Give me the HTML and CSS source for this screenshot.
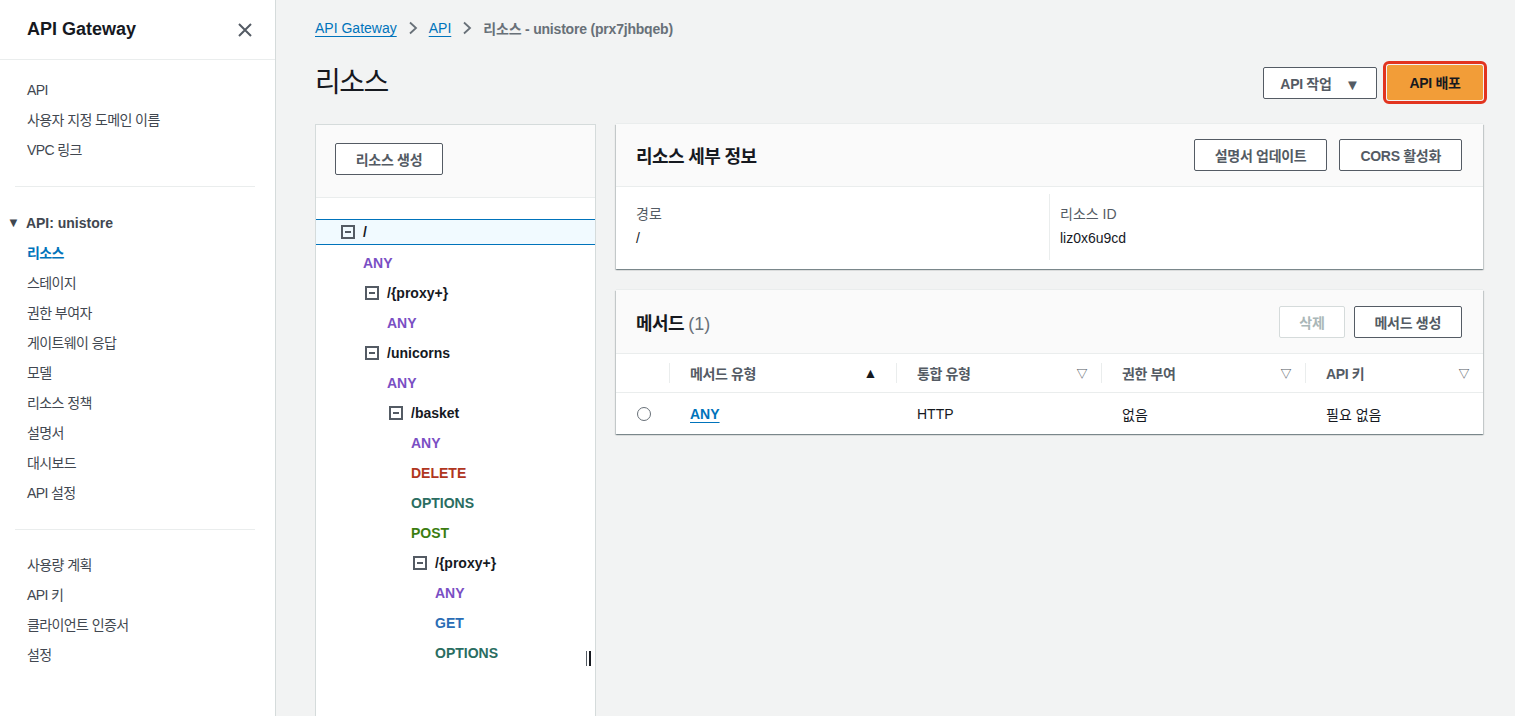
FILE: index.html
```html
<!DOCTYPE html>
<html lang="ko">
<head>
<meta charset="utf-8">
<title>API Gateway - 리소스</title>
<link rel="stylesheet" href="styles.css">
</head>
<body>
<div class="app">
  <aside class="sidebar">
    <div class="sb-head">
      <span class="sb-title">API Gateway</span>
      <svg class="sb-close" width="16" height="16" viewBox="0 0 16 16"><path d="M2 2 L14 14 M14 2 L2 14" stroke="#545b64" stroke-width="2" fill="none"/></svg>
    </div>
    <ul class="sb-list first">
      <li>API</li>
      <li>사용자 지정 도메인 이름</li>
      <li>VPC 링크</li>
    </ul>
    <div class="sb-divider"></div>
    <div class="sb-group">
      <div class="sb-group-title"><span class="caret">▼</span>API: unistore</div>
      <ul class="sb-list">
        <li class="active">리소스</li>
        <li>스테이지</li>
        <li>권한 부여자</li>
        <li>게이트웨이 응답</li>
        <li>모델</li>
        <li>리소스 정책</li>
        <li>설명서</li>
        <li>대시보드</li>
        <li>API 설정</li>
      </ul>
    </div>
    <div class="sb-divider"></div>
    <ul class="sb-list last">
      <li>사용량 계획</li>
      <li>API 키</li>
      <li>클라이언트 인증서</li>
      <li>설정</li>
    </ul>
  </aside>

  <main class="main">
    <nav class="breadcrumb">
      <a class="bc-link">API Gateway</a>
      <svg class="bc-sep" width="10" height="14" viewBox="0 0 10 14"><path d="M2 1.5 L8 7 L2 12.5" stroke="#687078" stroke-width="1.8" fill="none"/></svg>
      <a class="bc-link">API</a>
      <svg class="bc-sep" width="10" height="14" viewBox="0 0 10 14"><path d="M2 1.5 L8 7 L2 12.5" stroke="#687078" stroke-width="1.8" fill="none"/></svg>
      <span class="bc-current">리소스 - unistore (prx7jhbqeb)</span>
    </nav>

    <div class="page-head">
      <h1 class="page-title">리소스</h1>
      <div class="page-actions">
        <button class="btn btn-actions">API 작업 <span class="dd">▼</span></button>
        <button class="btn btn-primary">API 배포</button>
      </div>
    </div>

    <div class="content">
      <section class="tree-panel">
        <div class="tree-top">
          <button class="btn btn-small">리소스 생성</button>
        </div>
        <div class="tree">
          <div class="row node selected d0"><span class="minus"></span><span class="path">/</span></div>
          <div class="row method m0 any">ANY</div>
          <div class="row node d1"><span class="minus"></span><span class="path">/{proxy+}</span></div>
          <div class="row method m1 any">ANY</div>
          <div class="row node d1"><span class="minus"></span><span class="path">/unicorns</span></div>
          <div class="row method m1 any">ANY</div>
          <div class="row node d2"><span class="minus"></span><span class="path">/basket</span></div>
          <div class="row method m2 any">ANY</div>
          <div class="row method m2 del">DELETE</div>
          <div class="row method m2 opt">OPTIONS</div>
          <div class="row method m2 post">POST</div>
          <div class="row node d3"><span class="minus"></span><span class="path">/{proxy+}</span></div>
          <div class="row method m3 any">ANY</div>
          <div class="row method m3 get">GET</div>
          <div class="row method m3 opt">OPTIONS</div>
        </div>
        <span class="resize-handle"></span>
      </section>

      <div class="right">
        <section class="panel">
          <div class="panel-head">
            <h2 class="panel-title">리소스 세부 정보</h2>
            <div class="panel-actions">
              <button class="btn btn-med">설명서 업데이트</button>
              <button class="btn btn-med">CORS 활성화</button>
            </div>
          </div>
          <div class="details">
            <div class="detail">
              <div class="label">경로</div>
              <div class="value">/</div>
            </div>
            <div class="detail second">
              <div class="label">리소스 ID</div>
              <div class="value">liz0x6u9cd</div>
            </div>
          </div>
        </section>

        <section class="panel">
          <div class="panel-head methods-head">
            <h2 class="panel-title">메서드 <span class="count">(1)</span></h2>
            <div class="panel-actions">
              <button class="btn btn-med disabled">삭제</button>
              <button class="btn btn-med">메서드 생성</button>
            </div>
          </div>
          <div class="table">
            <div class="th sel"></div>
            <div class="th"><span class="sep"></span><span>메서드 유형</span><span class="sort up">▲</span></div>
            <div class="th"><span class="sep"></span><span>통합 유형</span><span class="sort">▽</span></div>
            <div class="th"><span class="sep"></span><span>권한 부여</span><span class="sort">▽</span></div>
            <div class="th"><span class="sep"></span><span>API 키</span><span class="sort">▽</span></div>
            <div class="td sel"><span class="radio"></span></div>
            <div class="td"><a class="link">ANY</a></div>
            <div class="td">HTTP</div>
            <div class="td">없음</div>
            <div class="td">필요 없음</div>
          </div>
        </section>
      </div>
    </div>
  </main>
</div>
</body>
</html>
```

FILE: styles.css
```css
* { box-sizing: border-box; }
html, body { margin: 0; padding: 0; }
body {
  font-family: "Liberation Sans", "Noto Sans CJK KR", sans-serif;
  font-size: 14px;
  color: #16191f;
  background: #f2f3f3;
  width: 1515px;
  height: 716px;
  overflow: hidden;
}
ul { list-style: none; margin: 0; padding: 0; }
button { font-family: inherit; }

.app { display: flex; height: 716px; }

/* Sidebar */
.sidebar {
  width: 276px;
  flex: none;
  background: #fff;
  border-right: 1px solid #d5dbdb;
  height: 716px;
}
.sb-head {
  height: 60px;
  padding: 0 22px 0 27px;
  display: flex;
  align-items: center;
  justify-content: space-between;
  border-bottom: 1px solid #eaeded;
}
.sb-title { font-size: 18px; font-weight: 700; color: #16191f; }
.sb-close { display: block; }
.sb-list li {
  height: 30px;
  line-height: 30px;
  padding-left: 27px;
  color: #414750;
  letter-spacing: -0.6px;
}
.sb-list.first { padding-top: 15px; padding-bottom: 21px; }
.sb-list.last { padding-top: 20px; }
.sb-list li.active { color: #0073bb; font-weight: 700; }
.sb-divider { height: 1px; background: #eaeded; margin: 0 20px 0 15px; }
.sb-group { padding-top: 21px; padding-bottom: 21px; }
.sb-group-title {
  height: 30px;
  line-height: 30px;
  padding-left: 7px;
  font-weight: 700;
  color: #414750;
}
.caret { font-size: 13px; margin-right: 6px; position: relative; top: -1px; color: #414750; }

/* Main */
.main { flex: 1; padding: 0 32px 0 39px; display: flex; flex-direction: column; min-height: 0; }
.main > * { flex: none; }
.breadcrumb {
  height: 56px;
  display: flex;
  align-items: center;
  gap: 10px;
}
.bc-link { color: #0073bb; text-decoration: underline; text-underline-offset: 3px; }
.bc-sep { display: block; margin: 0 1px; }
.bc-current { color: #687078; font-weight: 700; letter-spacing: -0.2px; }

.page-head {
  display: flex;
  align-items: center;
  justify-content: space-between;
  height: 52px;
  margin-bottom: 16px;
}
.page-title { margin: 0; font-size: 28px; font-weight: 400; color: #16191f; position: relative; top: -2px; letter-spacing: -1.5px; }
.page-actions { display: flex; align-items: center; gap: 10px; }

.btn {
  height: 32px;
  padding: 0 20px;
  border: 1px solid #545b64;
  border-radius: 2px;
  background: #fff;
  color: #545b64;
  font-size: 14px;
  font-weight: 700;
  letter-spacing: -0.3px;
}
.btn-actions { width: 114px; padding: 0; margin-top: 1px; }
.btn-actions .dd { font-size: 15px; margin-left: 10px; position: relative; top: 1px; }
.btn-primary {
  width: 96px;
  height: 35px;
  padding: 0;
  background: #f29d38;
  border-color: #f29d38;
  color: #16191f;
  outline: 3px solid #e2341f;
  outline-offset: 1px;
}

.content { display: flex; gap: 20px; align-items: flex-start; }

/* Tree panel */
.tree-panel {
  width: 281px;
  flex: none;
  height: 600px;
  background: #fff;
  border: 1px solid #d5dbdb;
  border-bottom: none;
  position: relative;
}
.tree-top {
  height: 73px;
  background: #fafafa;
  border-bottom: 1px solid #eaeded;
  padding: 18px 0 0 19px;
}
.btn-small { width: 108px; height: 32px; padding: 0; }
.tree { padding-top: 21px; }
.row { height: 30px; display: flex; align-items: center; font-weight: 700; }
.row.selected {
  height: 26px;
  margin-bottom: 3px;
  background: #f1faff;
  border-top: 1px solid #0073bb;
  border-bottom: 1px solid #0073bb;
}
.node .path { color: #16191f; }
.minus {
  width: 14px;
  height: 14px;
  border: 2px solid #545b64;
  position: relative;
  margin-right: 8px;
  flex: none;
}
.minus::after {
  content: "";
  position: absolute;
  left: 2px;
  right: 2px;
  top: 4px;
  height: 2px;
  background: #545b64;
}
.d0 { padding-left: 25px; }
.d1 { padding-left: 49px; }
.d2 { padding-left: 73px; }
.d3 { padding-left: 97px; }
.m0 { padding-left: 47px; }
.m1 { padding-left: 71px; }
.m2 { padding-left: 95px; }
.m3 { padding-left: 119px; }
.any { color: #7a4fc4; }
.del { color: #b0361e; }
.opt { color: #2a6d61; }
.post { color: #3b7d11; }
.get { color: #2a6db5; }

.resize-handle {
  position: absolute;
  left: 270px;
  top: 526px;
  width: 5px;
  height: 15px;
  border-left: 1px solid #545b64;
  border-right: 2px solid #16191f;
}

/* Right panels */
.right { flex: 1; display: flex; flex-direction: column; gap: 21px; }
.panel {
  background: #fff;
  box-shadow: 0 1px 1px 0 rgba(0, 28, 36, .3), 1px 1px 1px 0 rgba(0, 28, 36, .15), -1px 1px 1px 0 rgba(0, 28, 36, .15), 0 -1px 0 0 #eaeded;
}
.panel-head {
  height: 63px;
  background: #fafafa;
  border-bottom: 1px solid #eaeded;
  display: flex;
  align-items: center;
  justify-content: space-between;
  padding: 0 21px 0 20px;
}
.methods-head { height: 64px; }
.panel-title { margin: 0; font-size: 18px; font-weight: 700; color: #16191f; letter-spacing: -0.6px; }
.count { color: #687078; font-weight: 400; letter-spacing: 0; }
.panel-actions { display: flex; gap: 12px; }
.btn-med { padding: 0 20px; }
.btn-med.disabled { border-color: #d5dbdb; color: #aab7b8; padding: 0 19px; margin-right: -3px; }

.details { display: grid; grid-template-columns: 433px 1fr; padding: 7px 0 9px; }
.detail { padding: 9px 20px 9px 20px; }
.detail.second { border-left: 1px solid #eaeded; padding-left: 10px; }
.label { color: #545b64; line-height: 22px; }
.value { color: #16191f; line-height: 26px; }

.table {
  display: grid;
  grid-template-columns: 53px 227px 205px 204px 1fr;
}
.th {
  height: 39px;
  border-bottom: 1px solid #eaeded;
  display: flex;
  align-items: center;
  padding: 0 14px 0 21px;
  font-weight: 700;
  color: #545b64;
  position: relative;
  letter-spacing: -0.4px;
}
.th .sep {
  position: absolute;
  left: 0;
  top: 9px;
  height: 20px;
  width: 1px;
  background: #eaeded;
}
.th .sort { margin-left: auto; font-size: 11px; color: #545b64; }
.th .sort.up { color: #16191f; font-size: 14px; margin-right: 5px; }
.td {
  height: 41px;
  display: flex;
  align-items: center;
  padding-left: 21px;
  color: #16191f;
}
.td.sel { padding-left: 21px; }
.radio {
  width: 14px;
  height: 14px;
  border: 1.5px solid #687078;
  border-radius: 50%;
  display: block;
}
.link { color: #0073bb; font-weight: 700; text-decoration: underline; text-underline-offset: 3px; }
```
